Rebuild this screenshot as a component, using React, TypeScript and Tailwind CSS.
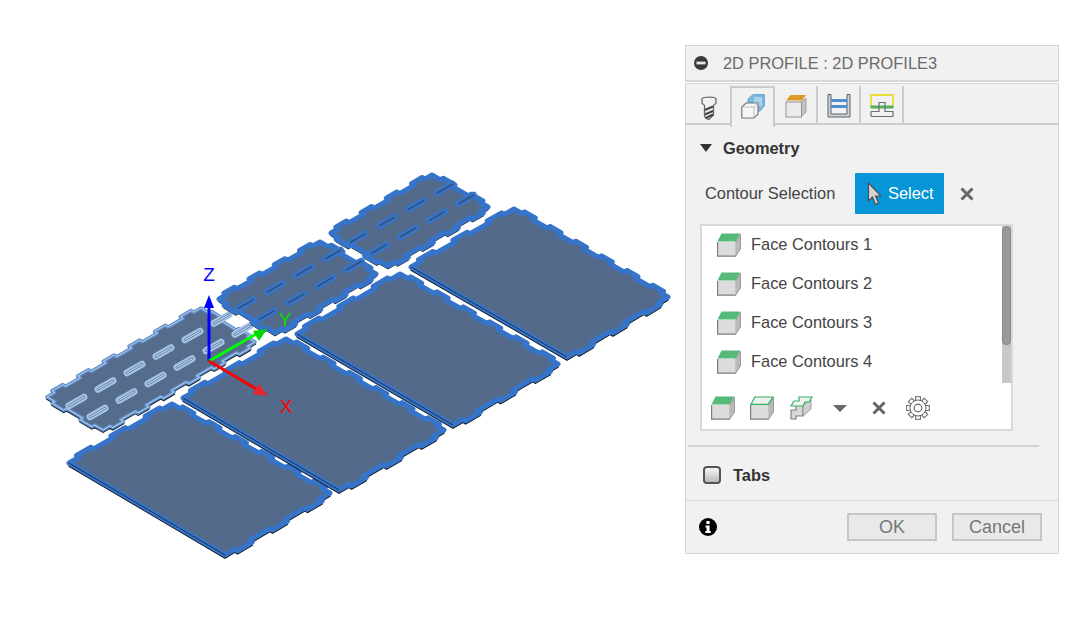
import { ReactNode } from 'react'

// ── Plate geometry ─────────────────────────────────────────────────────────

type Pt = [number, number]

const unit = (a: Pt, b: Pt): Pt => {
  const dx = b[0] - a[0]
  const dy = b[1] - a[1]
  const len = Math.hypot(dx, dy)
  return [dx / len, dy / len]
}

// walks P to Q and pushes n rectangular tabs out along `off`
function notched(P: Pt, Q: Pt, n: number, off: Pt, depth = 3.2): Pt[] {
  const pts: Pt[] = [P]
  const at = (t: number, d: number): Pt => [
    P[0] + (Q[0] - P[0]) * t + off[0] * d,
    P[1] + (Q[1] - P[1]) * t + off[1] * d,
  ]
  for (let i = 0; i < n; i++) {
    const a = (i + 0.3) / n
    const b = (i + 0.72) / n
    pts.push(at(a, 0), at(a, depth), at(b, depth), at(b, 0))
  }
  pts.push(Q)
  return pts
}

function outline(L: Pt, T: Pt, R: Pt, B: Pt, longN: number, shortN: number, large: boolean): string {
  const u = unit(L, T)
  const v = unit(T, R)
  const back: Pt = [-v[0], -v[1]]
  const pts = large
    ? [...notched(L, T, shortN, back), ...notched(T, R, longN, u), ...notched(R, B, shortN, v)]
    : [...notched(L, T, longN, back), ...notched(T, R, shortN, u), ...notched(R, B, longN, v), ...notched(B, L, shortN, [-u[0], -u[1]])]
  return pts.map((p) => p.join(',')).join(' ')
}

interface Plate {
  L: Pt
  T: Pt
  R: Pt
  B: Pt
}

const LARGE: Plate[] = [
  { L: [69, 463], T: [172, 404], R: [330, 493], B: [225, 555] },
  { L: [183, 398], T: [286, 339], R: [444, 430], B: [339, 490] },
  { L: [297, 334], T: [400, 274], R: [558, 364], B: [453, 425] },
  { L: [411, 267], T: [514, 209], R: [668, 297], B: [567, 357] },
]

const SMALL: { plate: Plate; n: number }[] = [
  { plate: { L: [219, 299], T: [320, 242], R: [376, 274], B: [275, 333] }, n: 4 },
  { plate: { L: [331, 233], T: [432, 175], R: [488, 207], B: [388, 266] }, n: 4 },
]

// slot centres are spaced 29,-16.5 along a row, 22,11 across rows
const slotsFrom = (x: number, y: number, cols: number): Pt[] => {
  const out: Pt[] = []
  for (let c = 0; c < cols; c++) {
    out.push([x + c * 29, y - c * 16.5])
    out.push([x + 21 + c * 29, y + 11 - c * 16.5])
  }
  return out
}

function Slot({ at, light }: { at: Pt; light?: boolean }) {
  const dx = 7.5
  const dy = -4.3
  const x1 = at[0] - dx
  const y1 = at[1] - dy
  const x2 = at[0] + dx
  const y2 = at[1] + dy
  return (
    <g strokeLinecap="round">
      <line x1={x1} y1={y1} x2={x2} y2={y2} stroke={light ? '#a5c3e6' : '#3674ca'} strokeWidth="7" />
      <line x1={x1} y1={y1} x2={x2} y2={y2} stroke={light ? '#5f80ab' : '#3f6aa8'} strokeWidth="2.6" />
      <line x1={x1} y1={y1} x2={x2} y2={y2} stroke={light ? '#d5e3f3' : '#24446d'} strokeWidth="1" />
    </g>
  )
}

function Scene() {
  const s1: Plate = { L: [47, 397], T: [201, 308], R: [255, 342], B: [103, 430] }
  const s1Pts = outline(s1.L, s1.T, s1.R, s1.B, 6, 2, false)
  return (
    <svg width="685" height="624" viewBox="0 0 685 624" className="shrink-0 block">
      {/* selected plate, lighter edge */}
      <polygon points={s1Pts} transform="translate(0 2)" fill="#1a2433" stroke="#1a2433" strokeWidth="2" strokeLinejoin="round" />
      <polygon points={s1Pts} fill="#566c8c" stroke="#5f8fcb" strokeWidth="3.5" strokeLinejoin="round" />
      <polygon points={s1Pts} fill="none" stroke="#b8d0ec" strokeWidth="1" strokeLinejoin="round" />
      {slotsFrom(76.5, 401.5, 6).map((p, i) => (
        <Slot key={i} at={p} light />
      ))}

      {SMALL.map(({ plate, n }, i) => {
        const pts = outline(plate.L, plate.T, plate.R, plate.B, n, 2, false)
        return (
          <g key={i}>
            <polygon points={pts} transform="translate(0 2.5)" fill="#10151d" stroke="#10151d" strokeWidth="1.5" strokeLinejoin="round" />
            <polygon points={pts} fill="#546a8a" stroke="#3674ca" strokeWidth="5" strokeLinejoin="round" />
            {slotsFrom(plate.L[0] + 27, plate.L[1] + 5, 4).map((p, j) => (
              <Slot key={j} at={p} />
            ))}
          </g>
        )
      })}

      {LARGE.map((p, i) => {
        const pts = outline(p.L, p.T, p.R, p.B, 6, 3, true)
        return (
          <g key={i}>
            <polygon points={pts} transform="translate(0 3)" fill="#0e1218" stroke="#0e1218" strokeWidth="1.5" strokeLinejoin="round" />
            <polygon points={pts} fill="#546a8a" stroke="#3674ca" strokeWidth="5" strokeLinejoin="round" />
            <line x1={p.L[0]} y1={p.L[1]} x2={p.B[0]} y2={p.B[1]} stroke="#1f3350" strokeWidth="1" />
          </g>
        )
      })}

      {/* triad */}
      <line x1="209" y1="361" x2="209" y2="305" stroke="#0000ff" strokeWidth="3" />
      <polygon points="209,295 204,308 214,308" fill="#0000ff" />
      <line x1="209" y1="361" x2="258" y2="333" stroke="#00ff00" strokeWidth="3" />
      <polygon points="267,329 253,331 259,341" fill="#00d800" />
      <line x1="209" y1="361" x2="258" y2="390" stroke="#ff0000" strokeWidth="3" />
      <polygon points="268,396 259,384 253,394" fill="#e8242c" />
      <text x="209" y="281" textAnchor="middle" fill="#0000ff" fontSize="19" fontFamily="Liberation Sans">Z</text>
      <text x="285" y="326" textAnchor="middle" fill="#00e000" fontSize="19" fontFamily="Liberation Sans">Y</text>
      <text x="286" y="413" textAnchor="middle" fill="#ff0000" fontSize="19" fontFamily="Liberation Sans">X</text>
    </svg>
  )
}

// ── Icons ──────────────────────────────────────────────────────────────────

function Cube({ top = 'solid' }: { top?: 'solid' | 'outline' }) {
  return (
    <svg width="24" height="24" viewBox="0 0 24 24" className="block">
      <polygon points="18.5,9 23.5,1.5 23.5,16 18.5,23.5" fill="#b9b9b9" stroke="#8a8a8a" strokeWidth="0.8" />
      <rect x="0.6" y="9" width="18" height="14.2" fill="#dcdcdc" />
      <path d="M0.6 9V23.2H18.6" fill="none" stroke="#7d7d7d" strokeWidth="1.2" />
      {top === 'solid' ? (
        <polygon points="4.5,0.5 23.5,0.5 18.5,8.5 0.5,8.5" fill="#55b978" />
      ) : (
        <polygon points="4.8,1 23,1 18,8.3 1,8.3" fill="#f0f0f0" stroke="#2fb35f" strokeWidth="1.2" />
      )}
    </svg>
  )
}

function LoopCube() {
  return (
    <svg width="24" height="24" viewBox="0 0 24 24" className="block">
      <path d="M1 14H6V9H13V20H6V23H1Z" fill="#d8d8d8" stroke="#7d7d7d" strokeWidth="1.1" />
      <polygon points="13,9 21,4 21,13 13,20" fill="#cfcfcf" stroke="#8a8a8a" strokeWidth="0.8" />
      <polygon points="9,1 22,1 19,6 15,6 13,10 1,10 4,5 9,5" fill="#f2f2f2" stroke="#2fb35f" strokeWidth="1.2" />
    </svg>
  )
}

function CloseX({ color = '#666666' }: { color?: string }) {
  return (
    <svg width="14" height="14" viewBox="0 0 14 14" className="block">
      <path d="M1.5 1.5L12.5 12.5M12.5 1.5L1.5 12.5" stroke={color} strokeWidth="3" />
    </svg>
  )
}

function Gear() {
  const teeth = Array.from({ length: 8 }, (_, i) => i * 45)
  return (
    <svg width="24" height="24" viewBox="0 0 24 24" className="block">
      {teeth.map((a) => (
        <rect key={a} x="9.6" y="0.7" width="4.8" height="5" fill="white" stroke="#666666" strokeWidth="1" transform={`rotate(${a} 12 12)`} />
      ))}
      <circle cx="12" cy="12" r="8" fill="white" stroke="#666666" strokeWidth="1" />
      <circle cx="12" cy="12" r="3.8" fill="white" stroke="#666666" strokeWidth="1.2" />
    </svg>
  )
}

function ToolIcon() {
  return (
    <svg width="16" height="24" viewBox="0 0 16 24" className="block">
      <path d="M1 3C1 0.5 15 0.5 15 3V7C15 8 12.5 8.5 12.5 9.5V19L8 23.5C5 23 3.5 21.5 3.5 19V9.5C3.5 8.5 1 8 1 7Z" fill="#f2f2f2" stroke="#6a6a6a" strokeWidth="1.3" />
      <path d="M3.8 14L12 10.5M3.8 18.5L12 15M5 22L12 18.5" stroke="#444444" strokeWidth="2" />
    </svg>
  )
}

function TwoCubesIcon() {
  return (
    <svg width="24" height="25" viewBox="0 0 24 25" className="block">
      <polygon points="7,5 12,0.7 23.3,0.7 23.3,12 19,17 7,17" fill="#7db8e0" stroke="#5e9ccb" strokeWidth="1" />
      <rect x="13" y="3" width="8" height="9" fill="#a7d3ef" />
      <polygon points="5,9 17,9 17,20 13,24 0.8,24 0.8,13" fill="#f7f7f7" stroke="#767676" strokeWidth="1.2" />
      <path d="M0.8 13H13V24M13 13L17 9" fill="none" stroke="#b5b5b5" strokeWidth="0.9" />
    </svg>
  )
}

function OrangeCubeIcon() {
  return (
    <svg width="22" height="24" viewBox="0 0 22 24" className="block">
      <polygon points="5.5,1 21,1 17,6.5 1,6.5" fill="#e09a28" />
      <polygon points="16,8 21,4 21,18 16,23" fill="#c4c4c4" stroke="#8a8a8a" strokeWidth="0.7" />
      <rect x="1" y="8" width="15.5" height="15" fill="#ebebeb" stroke="#8a8a8a" strokeWidth="0.9" />
    </svg>
  )
}

function BracketIcon() {
  return (
    <svg width="24" height="24" viewBox="0 0 24 24" className="block">
      <path d="M1 0.5V23H23V0.5H20V20H4V0.5Z" fill="#cfd2d6" stroke="#5b6270" strokeWidth="1" />
      <rect x="4" y="5" width="16" height="3" fill="#4f8fd0" />
      <rect x="4" y="11" width="16" height="3" fill="#4f8fd0" />
    </svg>
  )
}

function ClearanceIcon() {
  return (
    <svg width="24" height="24" viewBox="0 0 24 24" className="block">
      <path d="M1 13V1H23V13" fill="none" stroke="#ecdc3a" strokeWidth="1.8" />
      <rect x="0.5" y="11.5" width="23" height="3" fill="#57b05a" />
      <path d="M1 22.5H23M1 17.5H9V8.5H15V17.5H23V22.5M1 17.5V22.5" fill="none" stroke="#6b6f76" strokeWidth="1.2" />
    </svg>
  )
}

function MinusBadge() {
  return (
    <svg width="14" height="14" viewBox="0 0 14 14" className="block">
      <circle cx="7" cy="7" r="7" fill="#3a3a3a" />
      <rect x="2.5" y="5.6" width="9" height="2.8" fill="#e8e8e8" />
    </svg>
  )
}

function InfoBadge() {
  return (
    <svg width="18" height="18" viewBox="0 0 18 18" className="block">
      <circle cx="9" cy="9" r="9" fill="#000000" />
      <rect x="7.4" y="3" width="3.2" height="3" fill="#ffffff" />
      <path d="M6.5 7.5H10.6V13H11.8V15H6.4V13H7.6V9.5H6.5Z" fill="#ffffff" />
    </svg>
  )
}

function Arrow() {
  return (
    <svg width="15" height="24" viewBox="0 0 15 24" className="block">
      <path d="M1.5 1V19L5.5 15L8.5 22.5L11.5 21L8.5 14H14Z" fill="#d4d4d4" stroke="#4a4a4a" strokeWidth="1.1" />
    </svg>
  )
}

// ── Panel ──────────────────────────────────────────────────────────────────

function Tab({ active, children }: { active?: boolean; children: ReactNode }) {
  return (
    <div
      className={
        active
          ? 'w-[45px] h-[41px] -mb-[2px] pb-[3px] flex items-center justify-center bg-[#f1f1f1] border-2 border-b-0 border-[#cbcbcb]'
          : 'w-[43px] h-[39px] flex items-center justify-center border-r-2 border-[#cbcbcb]'
      }
    >
      {children}
    </div>
  )
}

function ContourRow({ n }: { n: number }) {
  return (
    <div className="h-[39px] flex items-center pl-[15px] gap-[10px]">
      <Cube />
      <span>Face Contours {n}</span>
    </div>
  )
}

function PanelButton({ label }: { label: string }) {
  return (
    <div className="w-[90px] h-[28px] flex items-center justify-center bg-[#e9e9e9] border-2 border-[#c6c6c6] text-[18px] text-[#777777]">
      {label}
    </div>
  )
}

function Panel() {
  return (
    <div className="mt-[45px] w-[374px] h-[509px] flex flex-col font-['Liberation_Sans',Arial,sans-serif] text-[16.4px] text-[#444444]">
      <div className="h-[37px] flex items-center pl-[8px] gap-[15px] bg-[#f1f1f1] border-2 border-[#d6d6d6] border-x border-t">
        <MinusBadge />
        <span className="text-[#6a6a6a] text-[16.4px]">2D PROFILE : 2D PROFILE3</span>
      </div>

      <div className="mt-[1px] flex-1 flex flex-col bg-[#f1f1f1] border-x border-t border-[#d6d6d6]">
        <div className="h-[41px] flex items-start pt-[2px] pl-[1px] border-b-2 border-[#cbcbcb]">
          <div className="w-[43px] h-[39px] flex items-center justify-center pt-[4px]">
            <ToolIcon />
          </div>
          <Tab active>
            <TwoCubesIcon />
          </Tab>
          <Tab>
            <OrangeCubeIcon />
          </Tab>
          <Tab>
            <BracketIcon />
          </Tab>
          <Tab>
            <ClearanceIcon />
          </Tab>
        </div>

        <div className="h-[46px] flex items-center pl-[14px] gap-[5px] font-bold text-[#333333]">
          <div className="w-0 h-0 border-x-[6px] border-x-transparent border-t-[8px] border-t-[#333333]" />
          <span className="ml-[6px]">Geometry</span>
        </div>

        <div className="h-[41px] mt-[2px] flex items-center pl-[19px]">
          <span className="w-[150px]">Contour Selection</span>
          <div className="w-[89px] h-[41px] flex items-center pl-[12px] gap-[6px] bg-[#0696d7] text-white rounded-[1px]">
            <Arrow />
            <span>Select</span>
          </div>
          <div className="ml-[16px]">
            <CloseX />
          </div>
        </div>

        <div className="relative mt-[10px] ml-[14px] w-[313px] h-[207px] bg-white border-2 border-[#d9d9d9]">
          <div className="-mt-[1px]">
            <ContourRow n={1} />
            <ContourRow n={2} />
            <ContourRow n={3} />
            <ContourRow n={4} />
          </div>
          <div className="absolute right-0 top-0 w-[9px] h-[157px] bg-[#c8c8c8]">
            <div className="h-[119px] bg-[#9a9a9a] border border-[#8a8a8a] rounded-[4px]" />
          </div>
          <div className="mt-[15px] pl-[9px] flex items-center">
            <Cube />
            <div className="ml-[15px]">
              <Cube top="outline" />
            </div>
            <div className="ml-[16px]">
              <LoopCube />
            </div>
            <div className="ml-[19px] w-0 h-0 border-x-[7px] border-x-transparent border-t-[7px] border-t-[#666666]" />
            <div className="ml-[25px]">
              <CloseX />
            </div>
            <div className="ml-[20px]">
              <Gear />
            </div>
          </div>
        </div>

        <div className="mt-[14px] ml-[2px] w-[351px] h-[2px] bg-[#d4d4d4]" />

        <div className="mt-[16px] pl-[17px] flex items-center gap-[12px] font-bold text-[#333333]">
          <div className="w-[18px] h-[18px] rounded-[4px] border-2 border-[#555555] bg-gradient-to-b from-[#f4f4f4] to-[#bcbcbc]" />
          <span>Tabs</span>
        </div>
      </div>

      <div className="h-[54px] flex items-center justify-between pl-[13px] pr-[16px] bg-[#f1f1f1] border border-[#d6d6d6]">
        <InfoBadge />
        <div className="flex gap-[15px]">
          <PanelButton label="OK" />
          <PanelButton label="Cancel" />
        </div>
      </div>
    </div>
  )
}

export default function App() {
  return (
    <div className="w-[1077px] h-[624px] flex items-start bg-white overflow-hidden">
      <Scene />
      <Panel />
    </div>
  )
}
